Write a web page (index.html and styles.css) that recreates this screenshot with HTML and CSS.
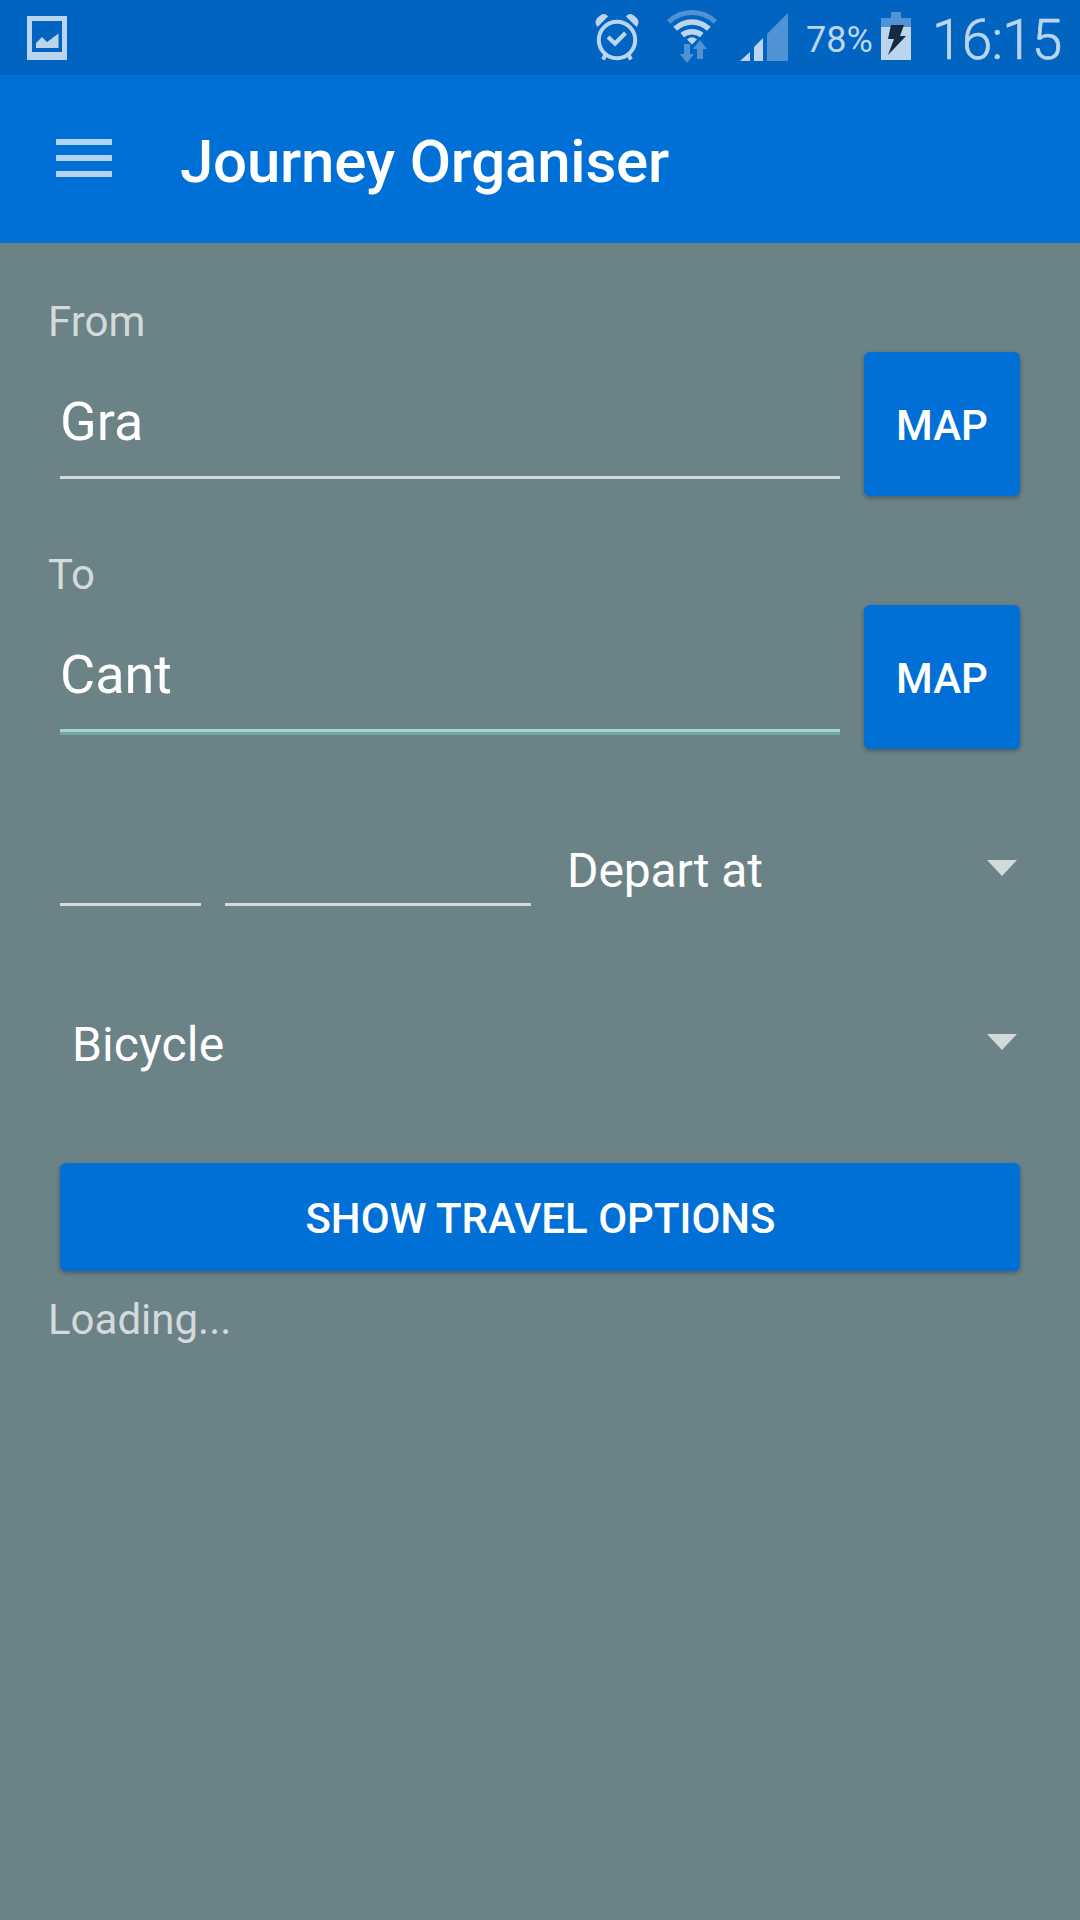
FILE: index.html
```html
<!DOCTYPE html>
<html lang="en">
<head>
<meta charset="utf-8">
<title>Journey Organiser</title>
<link rel="stylesheet" href="styles.css">
</head>
<body>
<div class="status-bar">
  <svg class="icon-image" width="40" height="44" viewBox="0 0 40 44">
    <path fill="#bbd5ed" fill-rule="evenodd" d="M0 0h40v44H0zM5 5v31h30V5z"/>
    <path fill="#bbd5ed" d="M9 32v-5l6-6 5 5 11.500-8.500V32z"/>
  </svg>
  <div class="status-group">
    <svg class="icon-alarm" width="46" height="48" viewBox="594 13 46 48">
      <g fill="none" stroke="#bbd5ed">
        <circle cx="617" cy="40" r="18.200" stroke-width="4"/>
        <path stroke-width="4.200" d="M608 37l7 6.500 10.500-10.500"/>
        <path stroke-width="4" d="M606.500 53l-3.500 6.500M627.500 53l3.500 6.500"/>
      </g>
      <path fill="#bbd5ed" d="M597 26.500Q594 22 597 18.500Q602 12.500 606 14.500L608 16.500L597.500 27zM637 26.500Q640 22 637 18.500Q632 12.500 628 14.500L626 16.500L636.500 27z"/>
    </svg>
    <svg class="icon-wifi" width="50" height="56" viewBox="667 9 50 56">
      <path fill="none" stroke="#4f93d4" stroke-width="5" d="M668.700 22A33.500 33.500 0 0 1 715.300 22"/>
      <path fill="none" stroke="#bbd5ed" stroke-width="5.500" d="M675.200 28.700A24.200 24.200 0 0 1 708.800 28.700"/>
      <path fill="none" stroke="#bbd5ed" stroke-width="5.500" d="M682.200 35.200A15.300 15.300 0 0 1 701.800 35.200"/>
      <path fill="#bbd5ed" d="M687 39.500q5-4.500 10 0l-5 5z"/>
      <path fill="#4f93d4" d="M684 44h6v10h4l-7 9-7-9h4zM697 59v-10h-4l7-9 7 9h-4v10z"/>
    </svg>
    <svg class="icon-signal" width="48" height="48" viewBox="0 0 48 48">
      <path fill="#bbd5ed" d="M0 48L10 39v9zM14 48V34l9-9v23z"/>
      <path fill="#4f93d4" d="M27 48V21L48 0v48z"/>
    </svg>
    <span class="battery-level">78%</span>
    <svg class="icon-battery" width="30" height="48" viewBox="0 0 30 48">
      <path fill="#4f93d4" d="M10 0h10v6h10v9H0V6h10z"/>
      <path fill="#bbd5ed" d="M0 15h30v33H0z"/>
      <path fill="#122b43" d="M10 13h13l-4 11h6L7 43l6-16H7z"/>
    </svg>
    <span class="clock">16:15</span>
  </div>
</div>
<header class="app-bar">
  <svg class="icon-menu" width="56" height="38" viewBox="0 0 56 38">
    <path fill="#b2d4f3" d="M0 0h56v6H0zM0 16h56v6H0zM0 32h56v6H0z"/>
  </svg>
  <h1 class="title">Journey Organiser</h1>
</header>
<main class="form">
  <section class="field">
    <div class="label">From</div>
    <div class="field-row">
      <div class="text-input">Gra</div>
      <button class="button map-button">MAP</button>
    </div>
  </section>
  <section class="field">
    <div class="label">To</div>
    <div class="field-row">
      <div class="text-input focused">Cant</div>
      <button class="button map-button">MAP</button>
    </div>
  </section>
  <div class="time-row">
    <div class="blank-input time"></div>
    <div class="blank-input date"></div>
    <div class="spinner depart"><span>Depart at</span><svg class="caret" width="30" height="16" viewBox="0 0 30 16"><path fill="#d3dadb" d="M0 0h30L15 16z"/></svg></div>
  </div>
  <div class="spinner mode"><span>Bicycle</span><svg class="caret" width="30" height="16" viewBox="0 0 30 16"><path fill="#d3dadb" d="M0 0h30L15 16z"/></svg></div>
  <button class="button submit">SHOW TRAVEL OPTIONS</button>
  <div class="label loading">Loading...</div>
</main>
</body>
</html>
```
FILE: styles.css
```css
* { box-sizing: border-box; }

body {
  margin: 0;
  min-height: 1920px;
  background: #6b8287;
  color: #fff;
  font-family: Roboto, "Liberation Sans", sans-serif;
}

svg { display: block; flex: none; }

.status-bar {
  display: flex;
  justify-content: space-between;
  height: 75px;
  padding: 0 20px 0 27px;
  background: #0064c0;
  color: #bbd5ed;
}
.icon-image { margin-top: 16px; }
.status-group { display: flex; }
.icon-alarm { margin: 13px 27px 0 0; }
.icon-wifi { margin: 9px 23px 0 0; }
.icon-signal { margin: 13px 18px 0 0; }
.battery-level {
  width: 67px;
  margin-right: 8px;
  font-size: 36px;
  line-height: 80px;
  white-space: nowrap;
}
.icon-battery { margin: 12px 21px 0 0; }
.clock {
  width: 128px;
  font-size: 55px;
  font-weight: 300;
  letter-spacing: -0.8px;
  line-height: 81px;
  white-space: nowrap;
  -webkit-text-stroke: 0.7px #bbd5ed;
}

.app-bar {
  display: flex;
  align-items: flex-start;
  height: 168px;
  padding-left: 56px;
  background: #006fd6;
}
.icon-menu { margin: 64px 68px 0 0; }
.title {
  margin: 0;
  font-size: 60px;
  font-weight: 500;
  letter-spacing: -0.22px;
  line-height: 174px;
}

.form { padding: 48px 60px 0; }
.field { margin-bottom: 48px; }
.label {
  margin-left: -12px;
  height: 61px;
  color: #d3dadb;
  font-size: 42px;
  line-height: 61px;
}
.field-row {
  display: flex;
  align-items: flex-start;
  gap: 24px;
}
.text-input {
  flex: 1;
  height: 127px;
  padding-top: 15px;
  border-bottom: 3px solid #d3dadb;
  font-size: 54px;
  line-height: 109px;
}
.text-input.focused {
  border-color: #a8d3d0;
  box-shadow: 0 3px #74a5a3;
}
.button {
  display: block;
  padding: 3px 0 0;
  border: 0;
  border-radius: 6px;
  background: #006fd6;
  box-shadow: 0 2px 4px rgba(0, 0, 0, 0.3);
  color: #fff;
  font: 500 42px Roboto, "Liberation Sans", sans-serif;
}
.map-button { width: 156px; height: 144px; }

.time-row {
  display: flex;
  height: 144px;
}
.blank-input {
  height: 109px;
  border-bottom: 3px solid #d3dadb;
}
.time { width: 141px; margin-right: 24px; }
.date { width: 306px; margin-right: 36px; }
.spinner {
  display: flex;
  flex: 1;
  justify-content: space-between;
  padding-right: 3px;
  font-size: 48px;
  line-height: 56px;
}
.depart { padding-top: 46px; letter-spacing: -0.12px; }
.mode {
  height: 129px;
  padding: 76px 3px 0 12px;
  margin-bottom: 93px;
  letter-spacing: 0.12px;
}
.caret { margin-top: 17px; }
.submit { width: 100%; height: 108px; padding-left: 1px; }
.loading { margin-top: 18px; }
```
